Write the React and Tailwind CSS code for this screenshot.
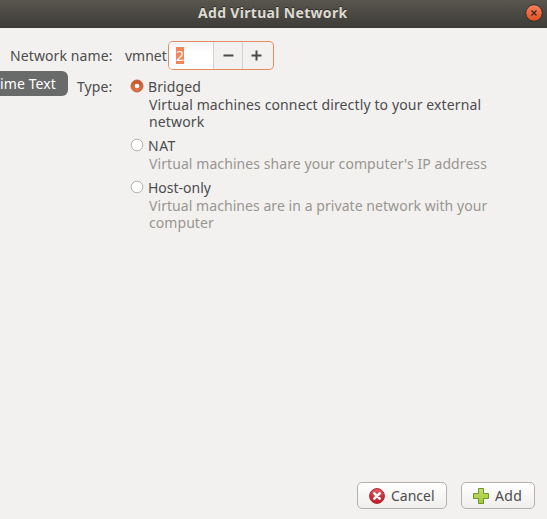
import React from "react";

function Radio({ checked }) {
  if (checked) {
    return (
      <svg width="14" height="14" viewBox="0 0 14 14" className="mb-0.5 shrink-0">
        <defs>
          <linearGradient id="radioFill" x1="0" y1="0" x2="0" y2="1">
            <stop offset="0" stopColor="#c9512a" />
            <stop offset="1" stopColor="#e2764c" />
          </linearGradient>
        </defs>
        <circle cx="7" cy="7" r="6" fill="url(#radioFill)" stroke="#c0603c" />
        <circle cx="7" cy="7" r="2.3" fill="#fff" />
      </svg>
    );
  }
  return (
    <svg width="14" height="14" viewBox="0 0 14 14" className="mb-0.5 shrink-0">
      <circle cx="7" cy="7" r="5.8" fill="#fff" stroke="#b5b3b0" />
    </svg>
  );
}

function Option({ label, labelClass, checked, textClass, children }) {
  return (
    <div className="pb-[7px]">
      <div className="flex h-[18px] items-center gap-1 leading-[18px]">
        <Radio checked={checked} />
        <span className={labelClass}>{label}</span>
      </div>
      <p className={`pl-[19px] leading-[17px] ${textClass}`}>{children}</p>
    </div>
  );
}

function CancelIcon() {
  return (
    <svg width="16" height="16" viewBox="0 0 16 16">
      <defs>
        <linearGradient id="cancelFill" x1="0" y1="0" x2="0" y2="1">
          <stop offset="0" stopColor="#e5646a" />
          <stop offset="0.5" stopColor="#d0333c" />
          <stop offset="1" stopColor="#bd202b" />
        </linearGradient>
      </defs>
      <circle cx="8" cy="8" r="7.4" fill="url(#cancelFill)" stroke="#b0222c" strokeWidth="1" />
      <path d="M5.3 5.3 10.7 10.7M10.7 5.3 5.3 10.7" stroke="#fff" strokeWidth="2.6" strokeLinecap="round" />
    </svg>
  );
}

function AddIcon() {
  return (
    <svg width="16" height="16" viewBox="0 0 16 16">
      <defs>
        <linearGradient id="addFill" x1="0" y1="0" x2="0" y2="1">
          <stop offset="0" stopColor="#c5dc68" />
          <stop offset="1" stopColor="#a3c838" />
        </linearGradient>
      </defs>
      <path d="M5.5.5h5v5h5v5h-5v5h-5v-5h-5v-5h5z" fill="url(#addFill)" stroke="#6c972a" strokeLinejoin="round" />
    </svg>
  );
}

const buttonClass =
  "flex h-[27px] items-center rounded-[5px] border border-[#b4b1ad] bg-linear-to-b from-white to-[#efeeed] pl-[11px]";

export default function App() {
  return (
    <div className="relative flex h-[519px] w-[547px] flex-col overflow-hidden bg-[#f2f1f0] font-['Noto_Sans',sans-serif] text-[14px] whitespace-nowrap text-[#4c4c4c]">
      <header className="flex h-7 shrink-0 items-center bg-linear-to-b from-[#59564e] to-[#3d3c37] pr-1 pl-[198px]">
        <h1 className="-mt-0.5 flex-1 text-[14px] leading-[18px] font-bold tracking-[0.32px] text-[#dfdbd2] [text-shadow:0_-1px_#2b2a26]">
          Add Virtual Network
        </h1>
        <svg width="18" height="18" viewBox="0 0 18 18" className="-mt-0.5">
          <defs>
            <linearGradient id="closeFill" x1="0" y1="0" x2="0" y2="1">
              <stop offset="0" stopColor="#f4825f" />
              <stop offset="1" stopColor="#e4501f" />
            </linearGradient>
          </defs>
          <circle cx="9" cy="9" r="8.3" fill="url(#closeFill)" stroke="#32312c" />
          <path d="M6.5 6.5 11.5 11.5M11.5 6.5 6.5 11.5" stroke="#3c2a20" strokeWidth="1.4" />
        </svg>
      </header>

      <main className="grow pt-[13px]">
        <div className="flex h-[29px] items-center">
          <div className="w-[125px] pl-2.5">
            <span className="tracking-[0.1px]">Network name:</span>
          </div>
          <div className="w-[43px]">vmnet</div>
          <div className="h-[29px] w-[106px] rounded-[5px] bg-[#e5895f] p-px">
            <div className="flex h-[27px] overflow-hidden rounded-[4px] bg-[#f2f1f0]">
              <div className="flex w-[44px] items-center bg-linear-to-b from-[#f4f4f4] to-white to-40% pl-[7px]">
                <span className="h-[17px] w-2 bg-[#f58558] leading-[17px] text-white">2</span>
              </div>
              <div className="flex w-[29px] items-center justify-center border-l border-[#d5d3d1]">
                <svg width="11" height="11" viewBox="0 0 11 11">
                  <path d="M.5 5.5h10" stroke="#4a4a4a" strokeWidth="2" />
                </svg>
              </div>
              <div className="flex w-[31px] items-center justify-center border-l border-[#d5d3d1] pr-[3px]">
                <svg width="11" height="11" viewBox="0 0 11 11">
                  <path d="M.5 5.5h10M5.5.5v10" stroke="#4a4a4a" strokeWidth="2" />
                </svg>
              </div>
            </div>
          </div>
        </div>
        <div className="flex pt-2">
          <div className="w-[130px] pl-[77px] leading-[17px]">
            <span className="tracking-[0.1px]">Type:</span>
          </div>
          <div>
            <Option label="Bridged" labelClass="tracking-[0.12px]" checked textClass="tracking-[0.13px]">
              Virtual machines connect directly to your external
              <br />
              network
            </Option>
            <Option label="NAT" labelClass="tracking-[0.5px]" textClass="tracking-[0.08px] text-[#99958f]">
              Virtual machines share your computer's IP address
            </Option>
            <Option label="Host-only" textClass="tracking-[0.06px] text-[#99958f]">
              Virtual machines are in a private network with your
              <br />
              computer
            </Option>
          </div>
        </div>
      </main>

      <footer className="flex justify-end gap-3.5 pr-3 pb-2.5">
        <button className={`${buttonClass} w-[90px] gap-[6px]`}>
          <CancelIcon />
          <span>Cancel</span>
        </button>
        <button className={`${buttonClass} w-[74px] gap-[6px]`}>
          <AddIcon />
          <span className="tracking-[0.3px]">Add</span>
        </button>
      </footer>

      <div className="absolute top-[71px] left-0 h-[25px] w-[68px] rounded-r-md bg-[#696b6b] leading-[25px] tracking-[0.1px] text-white">
        ime Text
      </div>
    </div>
  );
}
